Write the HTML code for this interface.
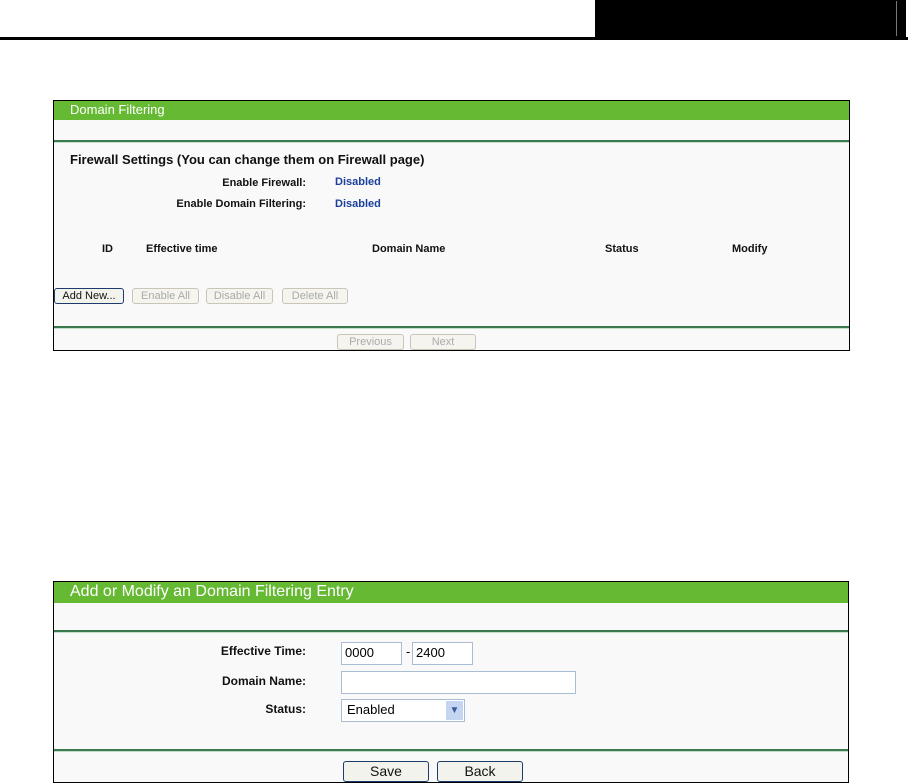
<!DOCTYPE html>
<html><head><style>
body{margin:0;width:908px;height:783px;background:#fff;position:relative;overflow:hidden;font-family:"Liberation Sans",Arial,sans-serif}
.a{position:absolute}
.p{position:absolute;border:1px solid #000;background:#f9f9f9;box-sizing:border-box}
.h{position:absolute;left:0;right:0;top:0;background:#66b933;color:#fff}
.ln{position:absolute;left:0;right:0;height:2px;background:#3b7a4f;border-bottom:1px solid #c6dccb}
.b{font-weight:bold;font-size:11px;color:#111}
.bt{position:absolute;box-sizing:border-box;border:1px solid #c9c6b8;border-radius:3px;background:#f5f4ee;color:#aaa;font-size:11px;text-align:center;line-height:14px}
.in{position:absolute;box-sizing:border-box;border:1px solid #a8bcd4;background:#fff;font-size:13px;line-height:20px;padding-left:3px}
</style></head><body>
<div class="a" style="left:595px;top:0;width:311px;height:37px;background:#000"></div>
<div class="a" style="left:896px;top:1px;width:1px;height:35px;background:#777"></div>
<div class="a" style="left:0;top:37px;width:908px;height:3px;background:#000"></div>

<div class="p" style="left:53px;top:100px;width:797px;height:251px">
 <div class="h" style="height:19px;font-size:13px;line-height:18px;padding-left:16px">Domain Filtering</div>
 <div class="ln" style="top:39px"></div>
 <div class="a" style="left:16px;top:51px;font-size:13px;font-weight:bold;color:#111">Firewall Settings (You can change them on Firewall page)</div>
 <div class="a b" style="right:543px;top:76px">Enable Firewall:</div>
 <div class="a b" style="left:281px;top:75px;color:#1a3f9c">Disabled</div>
 <div class="a b" style="right:543px;top:97px">Enable Domain Filtering:</div>
 <div class="a b" style="left:281px;top:97px;color:#1a3f9c">Disabled</div>
 <div class="a b" style="left:48px;top:142px">ID</div>
 <div class="a b" style="left:92px;top:142px">Effective time</div>
 <div class="a b" style="left:318px;top:142px">Domain Name</div>
 <div class="a b" style="left:551px;top:142px">Status</div>
 <div class="a b" style="left:678px;top:142px">Modify</div>
 <div class="bt" style="left:0;top:187px;width:70px;height:16px;border-color:#1c3d6b;color:#111;background:#f3f3ee">Add New...</div>
 <div class="bt" style="left:78px;top:187px;width:67px;height:16px">Enable All</div>
 <div class="bt" style="left:152px;top:187px;width:67px;height:16px">Disable All</div>
 <div class="bt" style="left:228px;top:187px;width:66px;height:16px">Delete All</div>
 <div class="ln" style="top:225px"></div>
 <div class="bt" style="left:283px;top:233px;width:67px;height:16px">Previous</div>
 <div class="bt" style="left:356px;top:233px;width:66px;height:16px">Next</div>
</div>

<div class="p" style="left:53px;top:581px;width:796px;height:202px">
 <div class="h" style="height:21px;font-size:16px;line-height:20px;padding-left:16px">Add or Modify an Domain Filtering Entry</div>
 <div class="ln" style="top:48px"></div>
 <div class="a b" style="right:542px;top:62px;font-size:12px">Effective Time:</div>
 <div class="in" style="left:287px;top:60px;width:61px;height:23px">0000</div>
 <div class="a" style="left:352px;top:62px;font-size:13px">-</div>
 <div class="in" style="left:358px;top:60px;width:61px;height:23px">2400</div>
 <div class="a b" style="right:542px;top:92px;font-size:12px">Domain Name:</div>
 <div class="in" style="left:287px;top:89px;width:235px;height:23px"></div>
 <div class="a b" style="right:542px;top:120px;font-size:12px">Status:</div>
 <div class="in" style="left:287px;top:117px;width:124px;height:23px;padding-left:5px">Enabled
  <div class="a" style="right:1px;top:1px;width:17px;height:19px;background:#c4d5f2;color:#3a5b9a;font-size:10px;text-align:center;line-height:19px">&#9660;</div></div>
 <div class="ln" style="top:167px"></div>
 <div class="bt" style="left:289px;top:179px;width:86px;height:21px;border-color:#1c3d6b;color:#111;font-size:14px;line-height:19px;background:#f3f3ee">Save</div>
 <div class="bt" style="left:383px;top:179px;width:86px;height:21px;border-color:#1c3d6b;color:#111;font-size:14px;line-height:19px;background:#f3f3ee">Back</div>
</div>
</body></html>
